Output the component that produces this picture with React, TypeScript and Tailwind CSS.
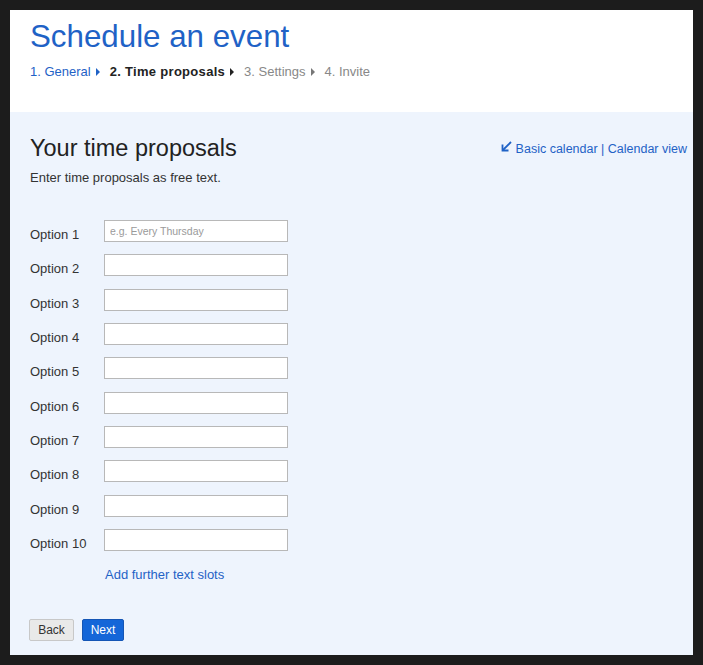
import React from 'react';

const steps = [
  { label: '1. General', cls: 'text-[#1f62c6]', caret: '#1f62c6' },
  { label: '2. Time proposals', cls: 'text-[#222] font-bold tracking-[0.3px]', caret: '#222' },
  { label: '3. Settings', cls: 'text-[#888]', caret: '#777' },
  { label: '4. Invite', cls: 'text-[#888]', caret: '' },
];

function Caret({ color }: { color: string }) {
  return (
    <svg width="4" height="8" viewBox="0 0 4 8" className="ml-[5px] mr-[10px]">
      <path d="M0 0 L4 4 L0 8 Z" fill={color} />
    </svg>
  );
}

export default function App() {
  const options = Array.from({ length: 10 }, (_, i) => i + 1);

  return (
    <div className="h-[665px] w-[703px] bg-[#1c1c1c] pt-[10px] pl-[10px] font-['Liberation_Sans',Arial,sans-serif]">
      <div className="flex h-[645px] w-[683px] flex-col">
        {/* Header */}
        <div className="h-[102px] bg-white px-[20px] pt-[9px]">
          <h1 className="text-[31.3px] leading-[36px] text-[#1f62c6]">Schedule an event</h1>
          <div className="mt-[9px] flex items-center text-[13px] leading-[16px]">
            {steps.map((s) => (
              <div key={s.label} className="flex items-center">
                <span className={s.cls}>{s.label}</span>
                {s.caret && <Caret color={s.caret} />}
              </div>
            ))}
          </div>
        </div>

        {/* Body */}
        <div className="flex-1 bg-[#eef4fd] px-[20px] pt-[22px]">
          <div className="flex items-start justify-between">
            <h2 className="text-[23.5px] leading-[28px] text-[#222]">Your time proposals</h2>
            <div className="mr-[-14px] mt-[7px] flex items-center text-[12.5px] leading-[16px] text-[#1f62c6]">
              <svg width="11" height="11" viewBox="0 0 11 11" className="mb-[5px] mr-[4px]">
                <path d="M10 1 L2 9" stroke="#1f62c6" strokeWidth="1.8" fill="none" />
                <path d="M1.5 3.5 V9.5 H7.5" stroke="#1f62c6" strokeWidth="1.8" fill="none" />
              </svg>
              <span>Basic calendar | Calendar view</span>
            </div>
          </div>
          <p className="mt-[8px] text-[13px] leading-[16px] text-[#333]">Enter time proposals as free text.</p>

          <div className="mt-[34px] flex flex-col gap-[12.33px]">
            {options.map((n) => (
              <div key={n} className="flex h-[22px] items-start">
                <label className="w-[74px] pt-[7px] text-[13px] leading-[16px] text-[#333]">Option {n}</label>
                <input
                  className="h-[22px] w-[184px] border border-[#b8b8b8] bg-white px-[5px] text-[10.5px] text-[#333] outline-none placeholder:text-[#9a9a9a]"
                  placeholder={n === 1 ? 'e.g. Every Thursday' : ''}
                />
              </div>
            ))}
          </div>

          <div className="ml-[75px] mt-[16px] text-[13px] leading-[16px] text-[#1f62c6]">Add further text slots</div>

          <div className="ml-[-1px] mt-[36px] flex gap-[8px]">
            <button className="h-[22px] w-[45px] rounded-[2px] border border-[#c8c8c8] bg-[#e9e9e9] text-[12px] text-[#333]">
              Back
            </button>
            <button className="h-[22px] w-[42px] rounded-[2px] border border-[#1556b5] bg-[#1466d8] text-[12px] text-white">
              Next
            </button>
          </div>
        </div>
      </div>
    </div>
  );
}
